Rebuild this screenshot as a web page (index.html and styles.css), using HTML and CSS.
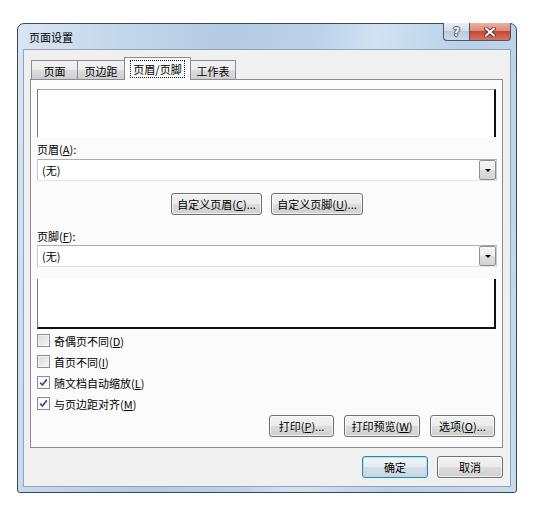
FILE: index.html
```html
<!DOCTYPE html>
<html lang="zh-CN">
<head>
    <meta charset="UTF-8">
    <title>页面设置</title>
    <link rel="stylesheet" href="styles.css">
</head>
<body>
    <div class="window">
        <div class="titlebar">
            <span class="title">页面设置</span>
            <div class="caption-btns">
                <span class="cap help">?</span>
                <span class="cap close">
                    <svg width="12" height="10" viewBox="0 0 12 10">
                        <path d="M2 1.5 L10 8.5 M10 1.5 L2 8.5" stroke="#4a2020" stroke-width="3.6" stroke-linecap="square"/>
                        <path d="M2 1.5 L10 8.5 M10 1.5 L2 8.5" stroke="#fff" stroke-width="2" stroke-linecap="square"/>
                    </svg>
                </span>
            </div>
        </div>

        <div class="client">
            <!-- 选项卡 -->
            <div class="tabs">
                <div class="tab t1">页面</div>
                <div class="tab t2">页边距</div>
                <div class="tab active"><span class="focus">页眉/页脚</span></div>
                <div class="tab t4">工作表</div>
            </div>

            <div class="panel">
                <div class="preview preview-top"></div>

                <div class="field-label">页眉(<u>A</u>):</div>
                <div class="combo">
                    <span class="combo-text">(无)</span>
                    <span class="drop"></span>
                </div>

                <div class="custom-row">
                    <button class="btn w91">自定义页眉(<u>C</u>)...</button>
                    <button class="btn w92">自定义页脚(<u>U</u>)...</button>
                </div>

                <div class="field-label second">页脚(<u>F</u>):</div>
                <div class="combo tight">
                    <span class="combo-text">(无)</span>
                    <span class="drop"></span>
                </div>

                <div class="preview preview-bottom"></div>

                <!-- 复选框 -->
                <div class="checks">
                    <div class="check-row"><span class="box"></span><span>奇偶页不同(<u>D</u>)</span></div>
                    <div class="check-row"><span class="box"></span><span>首页不同(<u>I</u>)</span></div>
                    <div class="check-row"><span class="box checked"></span><span>随文档自动缩放(<u>L</u>)</span></div>
                    <div class="check-row"><span class="box checked"></span><span>与页边距对齐(<u>M</u>)</span></div>
                </div>

                <div class="print-row">
                    <button class="btn w65">打印(<u>P</u>)...</button>
                    <button class="btn w76">打印预览(<u>W</u>)</button>
                    <button class="btn w65">选项(<u>O</u>)...</button>
                </div>
            </div>

            <div class="dialog-btns">
                <button class="btn w66 default">确定</button>
                <button class="btn w66">取消</button>
            </div>
        </div>
    </div>
</body>
</html>
```

FILE: styles.css
```css
* {
    box-sizing: border-box;
    margin: 0;
    padding: 0;
}

body {
    background: #fff;
    font-family: "Noto Sans CJK SC", "Noto Sans", sans-serif;
    font-size: 11px;
    color: #000;
    padding: 23px 0 0 17px;
}

u {
    text-underline-offset: 1px;
}

/* 窗口外框 */
.window {
    width: 500px;
    border: 1px solid #3d4652;
    border-radius: 7px 7px 3px 3px;
    padding: 0 5px 5px 5px;
    background: linear-gradient(100deg, #d9e6f3 0%, #c3d7eb 18%, #b3cbe5 36%, #bcd2ea 52%, #d2e2f2 62%, #b9d0e8 78%, #c7dbef 100%);
}

.titlebar {
    height: 25px;
    display: flex;
    justify-content: space-between;
    align-items: center;
}

.title {
    padding-left: 6px;
    padding-top: 1px;
    line-height: 14px;
}

.caption-btns {
    align-self: flex-start;
    margin-top: -1px;
    display: flex;
}

.cap {
    height: 18px;
    border: 1px solid #4a5566;
    border-top: none;
    display: flex;
    justify-content: center;
    align-items: center;
}

.help {
    width: 26px;
    border-right: none;
    border-radius: 0 0 0 4px;
    background: linear-gradient(#e9eef4 0%, #d3dde8 45%, #bccbdb 50%, #cddbe9 100%);
    color: #fff;
    font-family: "DejaVu Sans", sans-serif;
    font-weight: bold;
    font-size: 12px;
    text-shadow: 1px 0 0 #4a5260, -1px 0 0 #4a5260, 0 1px 0 #4a5260, 0 -1px 0 #4a5260;
    line-height: 14px;
}

.close {
    width: 42px;
    border-radius: 0 0 4px 0;
    background: linear-gradient(#eab0a3 0%, #da8d7c 45%, #c6473a 50%, #d47362 100%);
}

/* 客户区 */
.client {
    background: #f0f0f0;
    border: 1px solid #8fa3bb;
    padding: 7px 7px 8px 6px;
}

.tabs {
    height: 22px;
    display: flex;
    align-items: flex-end;
    padding-left: 1px;
}

.tab {
    height: 19px;
    border: 1px solid #898c95;
    border-bottom: none;
    background: linear-gradient(#f2f2f2 0%, #ebebeb 50%, #dddddd 50%, #cfcfcf 100%);
    display: flex;
    justify-content: center;
    align-items: center;
    line-height: 14px;
    padding-top: 1px;
}

.t1 { width: 47px; }
.t2 { width: 48px; margin-left: -1px; }
.t4 { width: 46px; margin-left: -1px; }

.tab.active {
    width: 67px;
    height: 23px;
    margin: 0 0 -1px -1px;
    background: #fbfbfb;
    position: relative;
    z-index: 1;
    padding-top: 0;
}

.focus {
    outline: 1px dotted #222;
    outline-offset: 1px;
    padding: 0 1px;
}

.panel {
    border: 1px solid #898c95;
    background: #fbfbfb;
    padding: 9px 5px 10px 6px;
}

.preview {
    background: #fff;
    margin-right: 1px;
}

.preview-top {
    height: 48px;
    border-top: 1px solid #a3a3a3;
    border-left: 1px solid #7a7a7a;
    border-right: 2px solid #111;
}

.preview-bottom {
    height: 50px;
    margin-top: 12px;
    border-left: 1px solid #7a7a7a;
    border-right: 2px solid #111;
    border-bottom: 2px solid #111;
}

.field-label {
    margin-top: 4px;
    height: 16px;
    line-height: 16px;
}

.field-label.second {
    margin-top: 13px;
}

.combo {
    margin-top: 2px;
    height: 22px;
    border: 1px solid #abadb3;
    border-color: #abadb3 #c9ccd2 #dfe3e8 #c9ccd2;
    background: #fff;
    display: flex;
    align-items: center;
    justify-content: space-between;
}

.combo.tight {
    margin-top: 1px;
}

.combo-text {
    padding-left: 4px;
    line-height: 14px;
}

.drop {
    width: 17px;
    height: 20px;
    border: 1px solid #8c8f94;
    border-radius: 2px;
    background: linear-gradient(#f6f6f6 0%, #ececec 50%, #dedede 50%, #d2d2d2 100%);
    position: relative;
}

.drop::after {
    content: "";
    position: absolute;
    left: 5px;
    top: 8px;
    border-left: 3px solid transparent;
    border-right: 3px solid transparent;
    border-top: 3px solid #000;
}

.custom-row {
    margin-top: 12px;
    display: flex;
    justify-content: center;
    gap: 9px;
}

/* 按钮 */
.btn {
    height: 22px;
    border: 1px solid #707070;
    border-radius: 3px;
    background: linear-gradient(#f2f2f2 0%, #ebebeb 50%, #dddddd 50%, #cfcfcf 100%);
    box-shadow: inset 0 0 0 1px rgba(255, 255, 255, 0.7);
    font: inherit;
    color: #000;
    line-height: 14px;
    padding: 0;
}

.btn.default {
    border-color: #3c7fb1;
    box-shadow: inset 0 0 0 1px #a6e2f8;
    background: linear-gradient(#f0f5f8 0%, #e6edf2 50%, #d6e0e8 50%, #c9d6e0 100%);
}

.w91 { width: 91px; }
.w92 { width: 92px; }
.w65 { width: 65px; }
.w76 { width: 76px; }
.w66 { width: 66px; }

/* 复选框 */
.checks {
    margin-top: 1px;
}

.check-row {
    height: 21px;
    display: flex;
    align-items: center;
    gap: 4px;
    line-height: 14px;
}

.box {
    width: 13px;
    height: 13px;
    border: 1px solid #8f8f8f;
    background: linear-gradient(135deg, #d6d8db 0%, #f7f7f7 100%);
    box-shadow: inset 0 0 0 1px #f4f4f4;
}

.box.checked {
    background: #fdfdfd url("data:image/svg+xml;utf8,<svg xmlns='http://www.w3.org/2000/svg' width='11' height='11'><path d='M2.2 5.6 L4.4 8 L8.8 2.4' fill='none' stroke='%23384f87' stroke-width='1.7'/></svg>") center / 11px 11px no-repeat;
}

.print-row {
    margin-top: 1px;
    margin-right: 2px;
    display: flex;
    justify-content: flex-end;
    gap: 10px;
}

.dialog-btns {
    margin-top: 8px;
    display: flex;
    justify-content: flex-end;
    gap: 9px;
}
```
